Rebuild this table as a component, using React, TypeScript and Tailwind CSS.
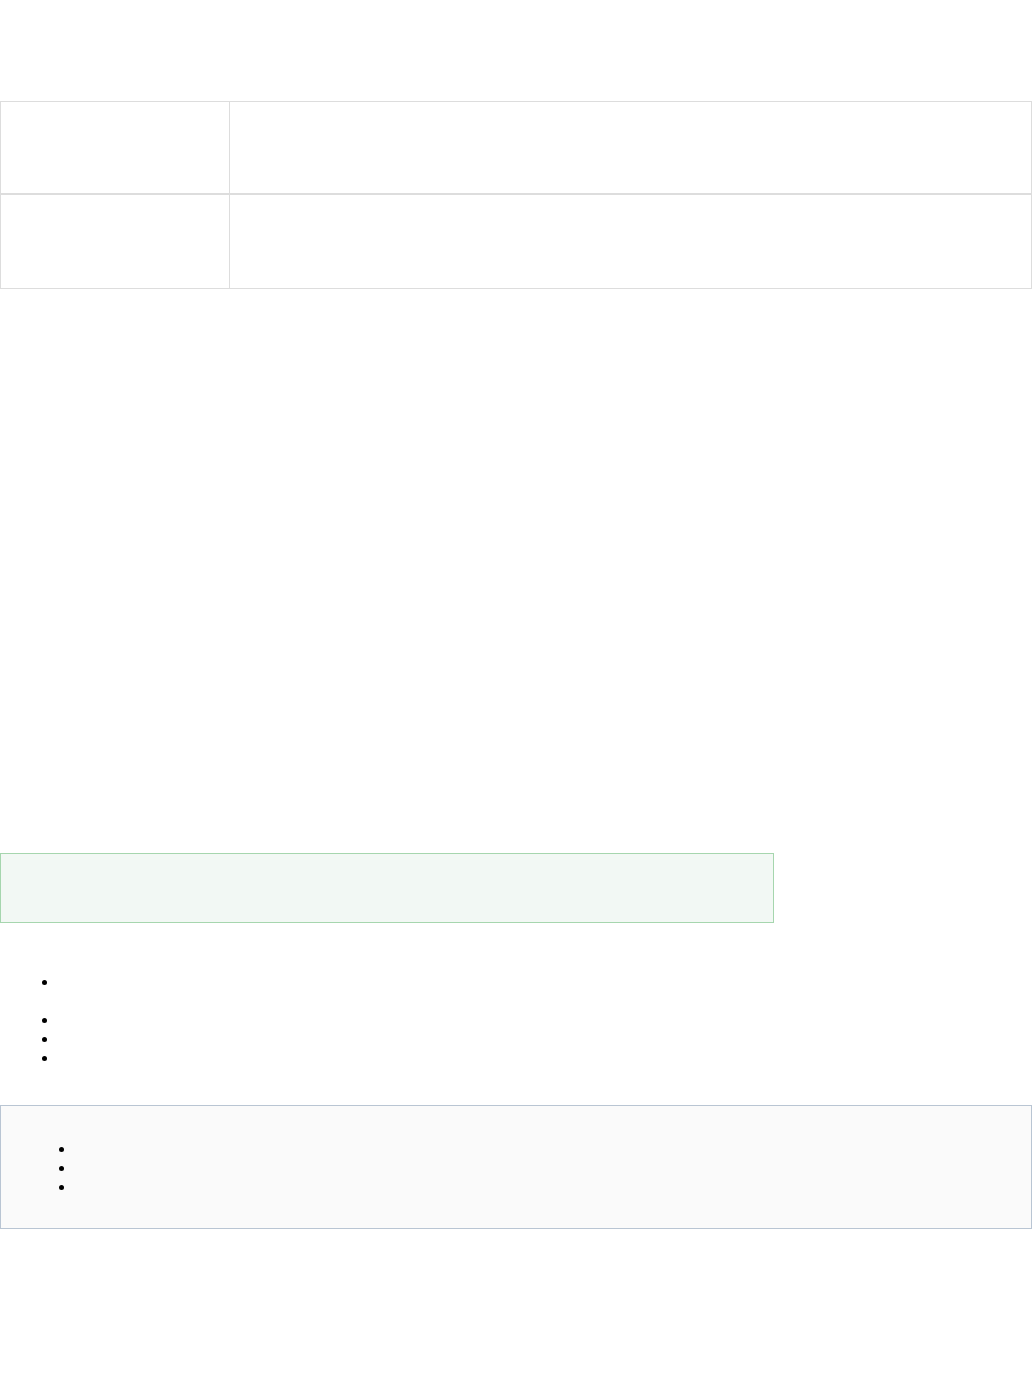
export default function App() {
  return (
    <div className="min-h-[1392px] bg-white font-['Liberation_Sans',Arial,sans-serif] text-[16px] leading-[19px] text-black">
      {/* Properties table */}
      <div className="pt-[101px] pr-px">
        <div className="border border-[#dddddd]">
          <div className="flex h-[93px] border-b-2 border-[#dddddd]">
            <div className="w-[229px] border-r border-[#dddddd]" />
            <div className="flex-1" />
          </div>
          <div className="flex h-[93px]">
            <div className="w-[229px] border-r border-[#dddddd]" />
            <div className="flex-1" />
          </div>
        </div>
      </div>

      {/* Success panel */}
      <div className="mt-[564px] h-[70px] w-[774px] border border-[#a6d6ae] bg-[#f2f8f4]" />

      {/* Bullet list */}
      <ul className="mt-[49px] list-disc pl-[58px]">
        <li className="mb-[19px]">&nbsp;</li>
        <li>&nbsp;</li>
        <li>&nbsp;</li>
        <li>&nbsp;</li>
      </ul>

      {/* Info panel */}
      <div className="mt-[38px] mr-px h-[124px] border border-[#b9c5d3] bg-[#fafafa] pt-[33px]">
        <ul className="list-disc pl-[74px]">
          <li>&nbsp;</li>
          <li>&nbsp;</li>
          <li>&nbsp;</li>
        </ul>
      </div>
    </div>
  );
}
